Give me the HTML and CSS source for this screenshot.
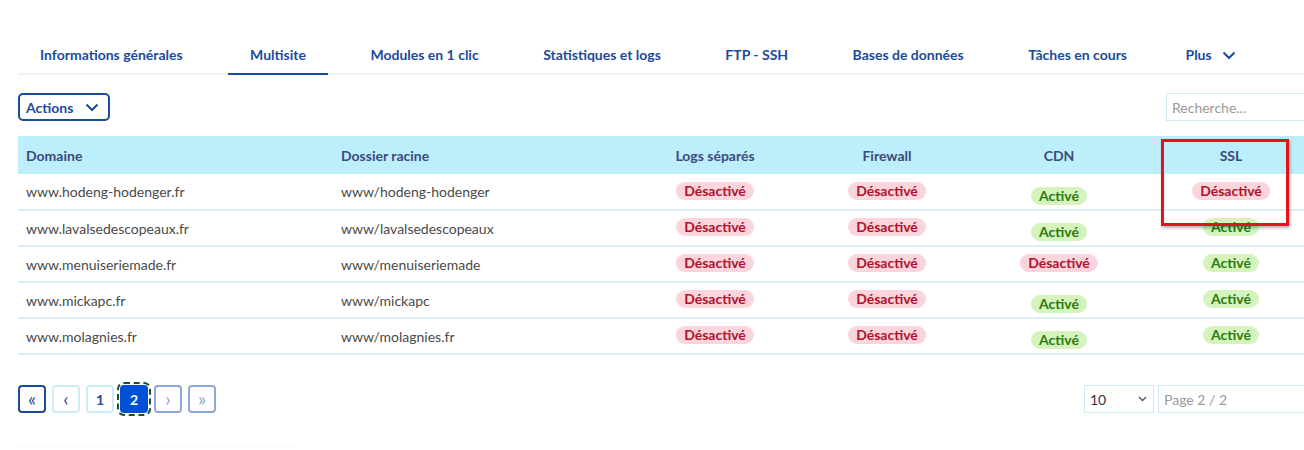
FILE: index.html
```html
<!DOCTYPE html>
<html lang="fr">
<head>
<meta charset="utf-8">
<link rel="stylesheet" href="styles.css">
</head>
<body>
<div class="page">
  <nav class="tabs">
    <a class="tab">Informations générales</a>
    <a class="tab active">Multisite</a>
    <a class="tab">Modules en 1 clic</a>
    <a class="tab">Statistiques et logs</a>
    <a class="tab">FTP - SSH</a>
    <a class="tab">Bases de données</a>
    <a class="tab">Tâches en cours</a>
    <a class="tab more">Plus <svg class="chev" width="14" height="9" viewBox="0 0 14 9"><path d="M1.5 1.5 L7 7 L12.5 1.5" fill="none" stroke="currentColor" stroke-width="2"/></svg></a>
  </nav>

  <div class="toolbar">
    <button class="actions">Actions <svg class="chev" width="14" height="9" viewBox="0 0 14 9"><path d="M1.5 1.5 L7 7 L12.5 1.5" fill="none" stroke="currentColor" stroke-width="2"/></svg></button>
    <input class="search" placeholder="Recherche...">
  </div>

  <div class="table-wrap">
    <table class="grid">
      <colgroup>
        <col class="c-dom"><col class="c-dir"><col class="c-st"><col class="c-st"><col class="c-st"><col class="c-st">
      </colgroup>
      <thead>
        <tr><th class="l">Domaine</th><th class="l">Dossier racine</th><th>Logs séparés</th><th>Firewall</th><th>CDN</th><th>SSL</th></tr>
      </thead>
      <tbody>
        <tr><td class="l">www.hodeng-hodenger.fr</td><td class="l">www/hodeng-hodenger</td><td><span class="badge off">Désactivé</span></td><td><span class="badge off">Désactivé</span></td><td><span class="badge on low">Activé</span></td><td><span class="badge off">Désactivé</span></td></tr>
        <tr><td class="l">www.lavalsedescopeaux.fr</td><td class="l">www/lavalsedescopeaux</td><td><span class="badge off">Désactivé</span></td><td><span class="badge off">Désactivé</span></td><td><span class="badge on low">Activé</span></td><td><span class="badge on">Activé</span></td></tr>
        <tr><td class="l">www.menuiseriemade.fr</td><td class="l">www/menuiseriemade</td><td><span class="badge off">Désactivé</span></td><td><span class="badge off">Désactivé</span></td><td><span class="badge off">Désactivé</span></td><td><span class="badge on">Activé</span></td></tr>
        <tr><td class="l">www.mickapc.fr</td><td class="l">www/mickapc</td><td><span class="badge off">Désactivé</span></td><td><span class="badge off">Désactivé</span></td><td><span class="badge on low">Activé</span></td><td><span class="badge on">Activé</span></td></tr>
        <tr><td class="l">www.molagnies.fr</td><td class="l">www/molagnies.fr</td><td><span class="badge off">Désactivé</span></td><td><span class="badge off">Désactivé</span></td><td><span class="badge on low">Activé</span></td><td><span class="badge on">Activé</span></td></tr>
      </tbody>
    </table>
    <div class="highlight"></div>
  </div>

  <div class="pager">
    <div class="pages">
      <button class="pg first arrow">«</button>
      <button class="pg light arrow">‹</button>
      <button class="pg light num">1</button>
      <button class="pg current">2</button>
      <button class="pg dim arrow">›</button>
      <button class="pg dim arrow">»</button>
    </div>
    <div class="pager-right">
      <div class="size">10 <svg width="9" height="6" viewBox="0 0 9 6"><path d="M1 1 L4.5 4.5 L8 1" fill="none" stroke="#555" stroke-width="1.3"/></svg></div>
      <input class="pageinput" placeholder="Page 2 / 2">
    </div>
  </div>
  <div class="footline"></div>
</div>
</body>
</html>
```

FILE: styles.css
```css
* { box-sizing: border-box; }
html, body { margin: 0; padding: 0; background: #fff; }
body {
  width: 1304px;
  height: 450px;
  overflow: hidden;
  font-family: Lato, "Open Sans", sans-serif;
  font-size: 14px;
}
.page {
  width: 1320px;
  padding: 0 0 0 18px;
}
.tabs {
  display: flex;
  gap: 20.5px;
  margin-top: 37px;
  border-bottom: 2px solid #edf4f6;
  height: 38px;
}
.tab {
  padding: 0 22px;
  height: 38px;
  line-height: 36px;
  font-weight: 700;
  color: #1b4b9c;
  white-space: nowrap;
  display: flex;
  align-items: center;
  gap: 12px;
  border-bottom: 2px solid transparent;
}
.tab:first-child { padding-right: 25px; }
.tab.active { border-bottom-color: #1b4b9c; }
.tab.more { padding-left: 16px; gap: 10px; }
.chev { display: block; }

.toolbar {
  display: flex;
  justify-content: space-between;
  align-items: center;
  margin-top: 18px;
  width: 1300px;
}
.actions {
  font: inherit;
  font-weight: 700;
  color: #1b4b9c;
  background: #fff;
  border: 2px solid #1b4b9c;
  border-radius: 5px;
  height: 28px;
  width: 92px;
  padding: 0 0 0 6px;
  display: flex;
  align-items: center;
  gap: 12px;
}
.search {
  width: 152px;
  height: 28px;
  border: 1px solid #cfeaf3;
  font: inherit;
  font-size: 14px;
  padding: 0 5px;
}
.search::placeholder, .pageinput::placeholder { color: #999; }

.table-wrap {
  position: relative;
  margin-top: 15px;
  width: 1299px;
}
.grid {
  width: 1299px;
  border-collapse: collapse;
  table-layout: fixed;
}
.c-dom { width: 315px; }
.c-dir { width: 296px; }
.c-st { width: 172px; }
.grid th {
  background: #bdeefb;
  height: 38px;
  font-weight: 700;
  color: #3c4a7c;
  text-align: center;
  padding: 0 8px;
}
.grid td {
  height: 36px;
  border-bottom: 2px solid #ddf0f6;
  color: #4a4a4a;
  text-align: center;
  padding: 0 8px;
  white-space: nowrap;
}
.grid .l { text-align: left; }
.badge {
  display: inline-block;
  font-weight: 700;
  font-size: 14px;
  line-height: 18px;
  padding: 0 8px;
  border-radius: 10px;
  position: relative;
  top: -1px;
}
.badge.off { background: #fcd4dc; color: #b0102c; }
.badge.on { background: #d5f4bd; color: #2c7a10; }
.badge.low { top: 4px; }

.highlight {
  position: absolute;
  left: 1143px;
  top: 3px;
  width: 128px;
  height: 87px;
  border: 3px solid #e8101a;
  box-shadow: 1px 2px 3px rgba(0,0,0,0.3);
}

.pager {
  display: flex;
  justify-content: space-between;
  align-items: center;
  margin-top: 30px;
  width: 1300px;
}
.pages { display: flex; gap: 6px; }
.pg {
  width: 28px;
  height: 28px;
  border-radius: 4px;
  background: #fff;
  font: inherit;
  font-weight: 700;
  font-size: 14px;
  padding: 0;
  display: flex;
  align-items: center;
  justify-content: center;
}
.pg.arrow { font-size: 19px; font-weight: 400; line-height: 1; padding-bottom: 2px; }
.pg.first { border: 2px solid #1b4b9c; color: #1b4b9c; }
.pg.light { border: 2px solid #ccedf6; color: #1b4b9c; }
.pg.current {
  background: #0050d7;
  color: #fff;
  border: 0;
  outline: 2px dashed #1e4d2b;
  outline-offset: 1px;
}
.pg.dim { border: 2px solid #8ea6d8; color: #8ea6d8; }
.pager-right { display: flex; gap: 4px; }
.size {
  width: 70px;
  height: 28px;
  border: 1px solid #cfeaf3;
  display: flex;
  align-items: center;
  justify-content: space-between;
  padding: 0 6px 0 5px;
  color: #333;
}
.pageinput {
  width: 160px;
  height: 28px;
  border: 1px solid #cfeaf3;
  font: inherit;
  padding: 0 5px;
}
.footline {
  margin-top: 33px;
  width: 277px;
  height: 1px;
  background: #f7f7ef;
}
```
